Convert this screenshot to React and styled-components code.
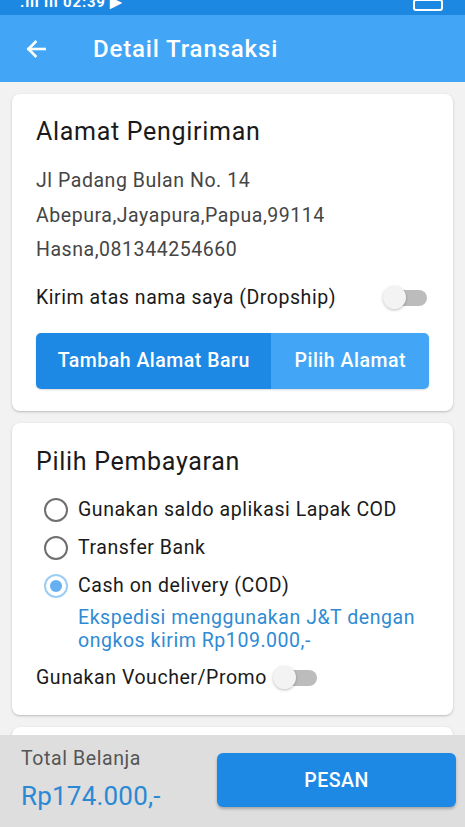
import React from "react";
import styled, { createGlobalStyle, css } from "styled-components";

const Global = createGlobalStyle`
  html, body { margin: 0; padding: 0; }
  body { font-family: Roboto, "Noto Sans", "Liberation Sans", sans-serif; background: #f2f2f2; }
  * { box-sizing: border-box; }
`;

const bodyText = css`
  font-size: 19.5px;
  letter-spacing: 0.55px;
`;

const Screen = styled.div`
  width: 465px;
  height: 827px;
  display: flex;
  flex-direction: column;
  overflow: hidden;
  background: #f2f2f2;
`;

const StatusBar = styled.div`
  height: 15px;
  flex: none;
  background: #1c88e2;
  overflow: hidden;
  display: flex;
  justify-content: space-between;
  align-items: flex-end;
  padding: 0 22px 0 20px;
  color: #fff;
`;

const StatusText = styled.div`
  font-size: 15px;
  font-weight: 700;
  line-height: 15px;
  margin-bottom: 5px;
  letter-spacing: 0.8px;
`;

const Battery = styled.div`
  width: 30px;
  height: 12px;
  border: 2px solid #fff;
  border-radius: 3px;
  margin-bottom: 4px;
`;

const AppBar = styled.header`
  height: 67px;
  flex: none;
  background: #42a5f5;
  display: flex;
  align-items: center;
  padding-left: 23px;
  color: #fff;
`;

const BackIcon = styled.svg`
  width: 26px;
  height: 26px;
  display: block;
`;

const Title = styled.h1`
  margin: 0 0 0 44px;
  font-size: 24px;
  font-weight: 500;
  letter-spacing: 0.85px;
`;

const Content = styled.main`
  flex: 1;
  overflow: hidden;
  padding: 12px;
  display: flex;
  flex-direction: column;
  gap: 12px;
`;

const Card = styled.section`
  background: #fff;
  border-radius: 8px;
  box-shadow: 0 1px 3px rgba(0, 0, 0, 0.18), 0 1px 1px rgba(0, 0, 0, 0.06);
  padding: ${(p) => p.$pad || "20px 24px 22px"};
  flex: none;
  min-height: ${(p) => p.$min || "auto"};
`;

const CardTitle = styled.h2`
  margin: 0;
  font-size: 25px;
  font-weight: 400;
  letter-spacing: 0.7px;
  line-height: 36px;
  color: #1a1a1a;
`;

const AddressBlock = styled.div`
  margin-top: 14px;
`;

const AddressLine = styled.div`
  ${bodyText};
  line-height: 34.5px;
  color: #454545;
`;

const SwitchRow = styled.div`
  ${bodyText};
  display: flex;
  align-items: center;
  justify-content: ${(p) => (p.$inline ? "flex-start" : "space-between")};
  gap: 6px;
  height: 40px;
  margin-top: ${(p) => p.$mt || "10px"};
  color: #1a1a1a;
`;

const Switch = styled.div`
  position: relative;
  width: 46px;
  height: 24px;
  flex: none;
`;

const Track = styled.div`
  position: absolute;
  left: 10px;
  right: 2px;
  top: 4px;
  height: 16px;
  border-radius: 8px;
  background: #bcbcbc;
`;

const Thumb = styled.div`
  position: absolute;
  left: 0;
  top: 0;
  width: 23px;
  height: 23px;
  border-radius: 50%;
  background: #f3f3f3;
  box-shadow: 0 1px 3px rgba(0, 0, 0, 0.25);
`;

const ButtonGroup = styled.div`
  margin-top: 15px;
  height: 56px;
  display: flex;
  border-radius: 5px;
  overflow: hidden;
  box-shadow: 0 1px 2px rgba(0, 0, 0, 0.15);
`;

const GroupButton = styled.button`
  border: 0;
  margin: 0;
  padding: 0;
  height: 100%;
  flex: ${(p) => p.$flex};
  background: ${(p) => (p.$primary ? "#1e88e5" : "#42a5f5")};
  color: #fff;
  font-family: inherit;
  font-size: 19.5px;
  letter-spacing: 0.5px;
  font-weight: 500;
`;

const RadioList = styled.div`
  margin-top: 11px;
`;

const RadioRow = styled.label`
  ${bodyText};
  display: flex;
  align-items: center;
  height: 38px;
  padding-left: 8px;
  gap: 10px;
  color: #1a1a1a;
`;

const RadioCircle = styled.span`
  width: 24px;
  height: 24px;
  border-radius: 50%;
  border: 2px solid ${(p) => (p.$checked ? "#9ccdf3" : "#6f6f6f")};
  display: flex;
  align-items: center;
  justify-content: center;
  flex: none;
  &::after {
    content: "";
    width: 12px;
    height: 12px;
    border-radius: 50%;
    background: ${(p) => (p.$checked ? "#64b0f2" : "transparent")};
  }
`;

const Note = styled.div`
  ${bodyText};
  margin: 1px 0 0 42px;
  line-height: 23px;
  color: #2f8bd3;
`;

const BottomBar = styled.footer`
  height: 92px;
  flex: none;
  background: #dedede;
  display: grid;
  grid-template-columns: 1fr 239px;
  align-items: center;
  padding: 0 9px 0 21px;
`;

const TotalBox = styled.div`
  display: flex;
  flex-direction: column;
  gap: 9px;
  margin-top: -4px;
`;

const TotalLabel = styled.div`
  font-size: 19.5px;
  letter-spacing: 0.6px;
  line-height: 24px;
  color: #555;
`;

const TotalValue = styled.div`
  font-size: 26px;
  letter-spacing: 0.2px;
  line-height: 32px;
  color: #2b89d4;
`;

const OrderButton = styled.button`
  height: 54px;
  border: 0;
  border-radius: 6px;
  background: #1e88e5;
  color: #fff;
  font-family: inherit;
  font-size: 19.5px;
  letter-spacing: 0.5px;
  font-weight: 500;
  box-shadow: 0 2px 3px rgba(0, 0, 0, 0.25);
  margin-bottom: 2px;
`;

const ToggleSwitch = () => (
  <Switch>
    <Track />
    <Thumb />
  </Switch>
);

export default function App() {
  return (
    <>
      <Global />
      <Screen>
        <StatusBar>
          <StatusText>.ıll ıll 02:39 ▶</StatusText>
          <Battery />
        </StatusBar>
        <AppBar>
          <BackIcon viewBox="0 0 24 24" fill="none" stroke="#fff" strokeWidth="2.4" strokeLinecap="square">
            <path d="M20 12H5" />
            <path d="M11.5 5.5L5 12l6.5 6.5" />
          </BackIcon>
          <Title>Detail Transaksi</Title>
        </AppBar>
        <Content>
          <Card>
            <CardTitle>Alamat Pengiriman</CardTitle>
            <AddressBlock>
              <AddressLine>Jl Padang Bulan No. 14</AddressLine>
              <AddressLine>Abepura,Jayapura,Papua,99114</AddressLine>
              <AddressLine>Hasna,081344254660</AddressLine>
            </AddressBlock>
            <SwitchRow>
              <span>Kirim atas nama saya (Dropship)</span>
              <ToggleSwitch />
            </SwitchRow>
            <ButtonGroup>
              <GroupButton $primary $flex="236">Tambah Alamat Baru</GroupButton>
              <GroupButton $flex="158">Pilih Alamat</GroupButton>
            </ButtonGroup>
          </Card>
          <Card $pad="21px 24px 17px">
            <CardTitle>Pilih Pembayaran</CardTitle>
            <RadioList>
              <RadioRow>
                <RadioCircle />
                Gunakan saldo aplikasi Lapak COD
              </RadioRow>
              <RadioRow>
                <RadioCircle />
                Transfer Bank
              </RadioRow>
              <RadioRow>
                <RadioCircle $checked />
                Cash on delivery (COD)
              </RadioRow>
            </RadioList>
            <Note>
              Ekspedisi menggunakan J&amp;T dengan
              <br />
              ongkos kirim Rp109.000,-
            </Note>
            <SwitchRow $inline $mt="6px">
              <span>Gunakan Voucher/Promo</span>
              <ToggleSwitch />
            </SwitchRow>
          </Card>
          <Card $min="80px" />
        </Content>
        <BottomBar>
          <TotalBox>
            <TotalLabel>Total Belanja</TotalLabel>
            <TotalValue>Rp174.000,-</TotalValue>
          </TotalBox>
          <OrderButton>PESAN</OrderButton>
        </BottomBar>
      </Screen>
    </>
  );
}
